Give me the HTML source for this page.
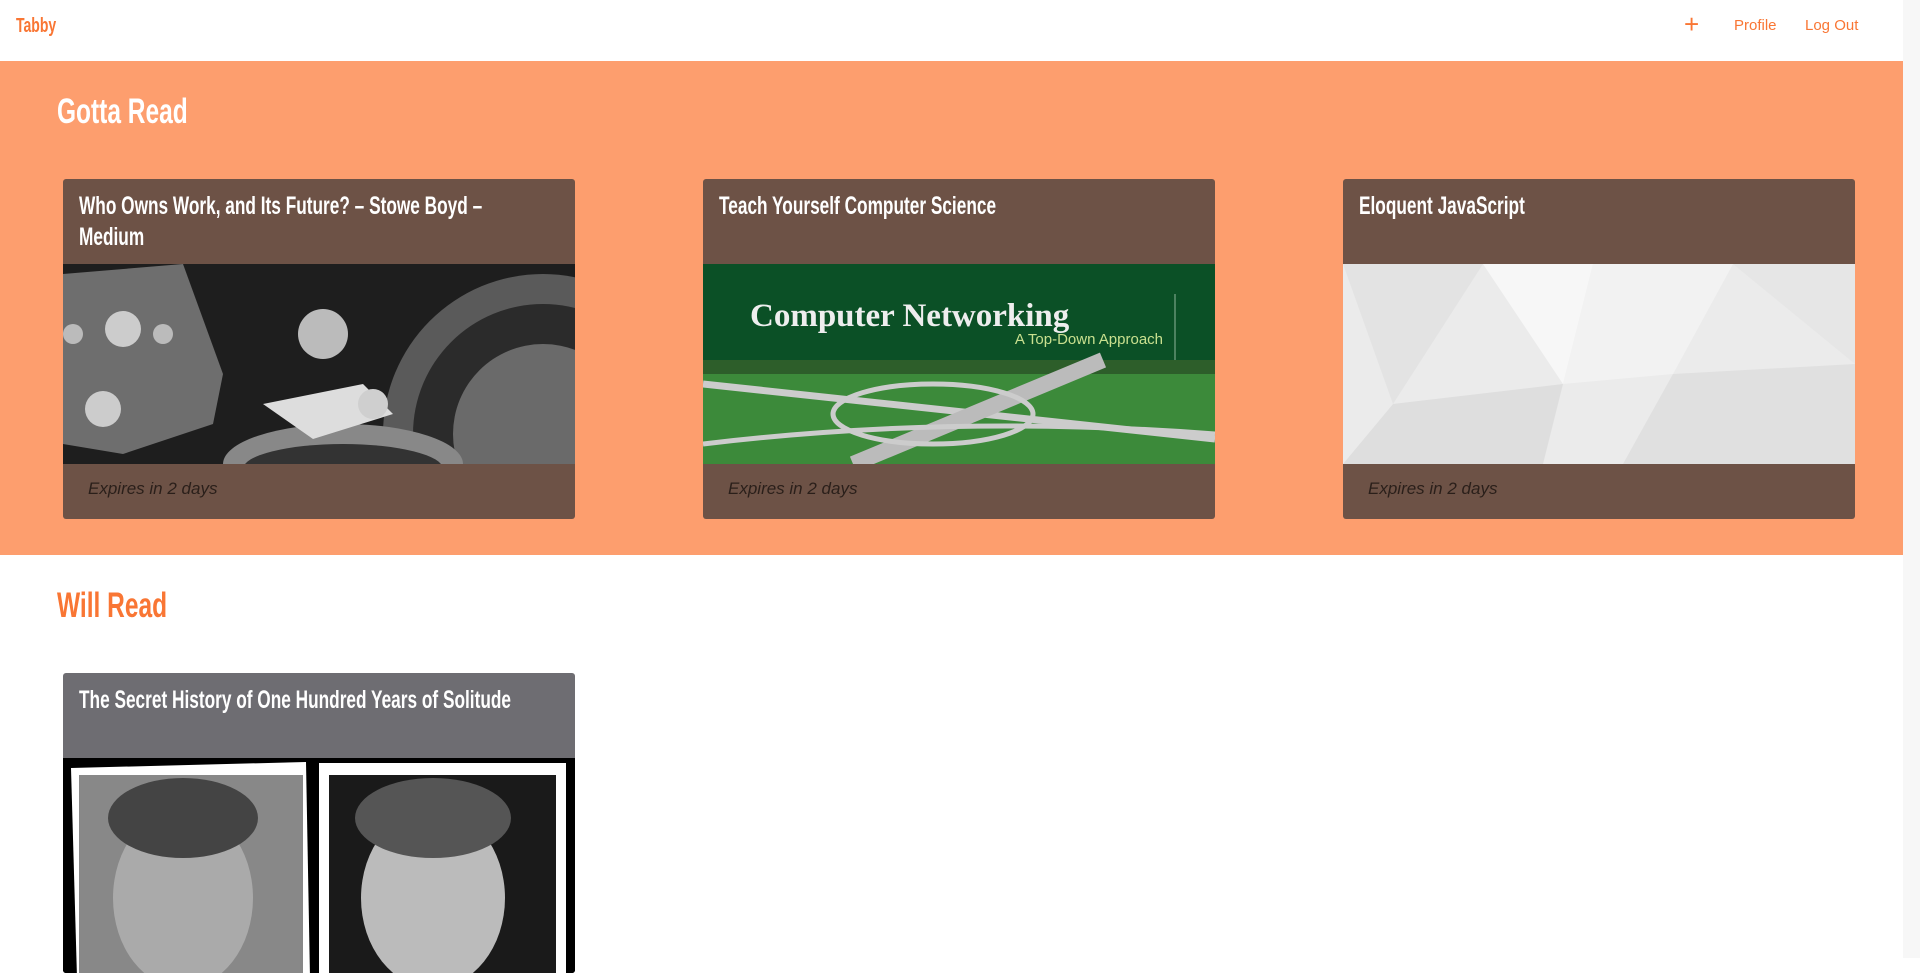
<!DOCTYPE html>
<html><head><meta charset="utf-8"><style>
*{margin:0;padding:0;box-sizing:border-box}
html,body{width:1920px;height:958px;overflow:hidden;background:#fff;font-family:"Liberation Sans",sans-serif}
.nav{position:absolute;left:0;top:0;width:1903px;height:61px;background:#fff}
.scroll{position:absolute;left:1903px;top:0;width:17px;height:958px;background:#f7f7f7}
.c{display:inline-block;transform:scaleX(.7);transform-origin:0 0;white-space:nowrap}
.brand{position:absolute;left:16px;top:15px;font-weight:bold;font-size:20px;color:#f97634}
.nl{position:absolute;top:17px;font-size:15px;color:#f97634}
.gotta{position:absolute;left:0;top:61px;width:1903px;height:494px;background:#fd9e6e}
h2{position:absolute;font-weight:bold;font-size:35px}
.card{position:absolute;width:512px;border-radius:3px;overflow:hidden;background:#6d5246}
.ct{height:85px;padding:12px 16px 0;color:#fff;font-size:25px;line-height:31px;font-weight:bold}
.ct .c{display:block;transform:scaleX(.69)}
.img{height:200px;position:relative;overflow:hidden}
.cf{height:54px;padding:15px 25px;font-style:italic;font-size:17px;color:#2a1f1a}
</style></head><body>
<div class="nav">
<div class="brand"><span class="c">Tabby</span></div>
<div class="nl" style="left:1684px;top:11px;font-size:26px;line-height:26px">+</div>
<div class="nl" style="left:1734px">Profile</div>
<div class="nl" style="left:1805px">Log Out</div>
</div>
<div class="scroll"></div>
<div class="gotta"></div>
<h2 style="left:57px;top:92px;color:#fff"><span class="c">Gotta Read</span></h2>

<div class="card" style="left:63px;top:179px;height:340px">
<div class="ct"><span class="c">Who Owns Work, and Its Future? – Stowe Boyd –</span><span class="c">Medium</span></div>
<div class="img" style="background:#2a2a2a">
<svg width="512" height="200" viewBox="0 0 512 200">
<rect width="512" height="200" fill="#1e1e1e"/>
<circle cx="480" cy="170" r="160" fill="#5a5a5a"/>
<circle cx="480" cy="170" r="130" fill="#2b2b2b"/>
<circle cx="480" cy="170" r="90" fill="#6a6a6a"/>
<circle cx="260" cy="70" r="25" fill="#bbb"/>
<polygon points="0,10 120,0 160,110 150,160 60,190 0,180" fill="#6e6e6e"/>
<circle cx="60" cy="65" r="18" fill="#ccc"/><circle cx="40" cy="145" r="18" fill="#ccc"/><circle cx="100" cy="70" r="10" fill="#bbb"/><circle cx="10" cy="70" r="10" fill="#bbb"/>
<ellipse cx="280" cy="200" rx="120" ry="40" fill="#888"/>
<ellipse cx="280" cy="205" rx="100" ry="25" fill="#333"/>
<path d="M200 140 L300 120 L330 150 L250 175 Z" fill="#ddd"/>
<circle cx="310" cy="140" r="15" fill="#cfcfcf"/>
</svg></div>
<div class="cf">Expires in 2 days</div>
</div>

<div class="card" style="left:703px;top:179px;height:340px">
<div class="ct"><span class="c">Teach Yourself Computer Science</span></div>
<div class="img">
<svg width="512" height="200" viewBox="0 0 512 200">
<rect width="512" height="96" fill="#0b5026"/>
<line x1="472" y1="30" x2="472" y2="96" stroke="#8fb59a" stroke-width="1"/>
<text x="47" y="62" font-family="Liberation Serif,serif" font-weight="bold" font-size="33" fill="#eee">Computer Networking</text>
<text x="460" y="80" text-anchor="end" font-family="Liberation Sans,sans-serif" font-size="15" fill="#c9e08f">A Top-Down Approach</text>
<rect y="96" width="512" height="104" fill="#3c8a3a"/>
<rect y="96" width="512" height="14" fill="#2d5e2a"/>
<path d="M0 120 L512 175" stroke="#ccc" stroke-width="7"/>
<path d="M150 200 L400 96" stroke="#bbb" stroke-width="16"/>
<ellipse cx="230" cy="150" rx="100" ry="30" fill="none" stroke="#ccc" stroke-width="5"/>
<path d="M0 180 Q250 150 512 170" stroke="#ccc" stroke-width="5" fill="none"/>
</svg></div>
<div class="cf">Expires in 2 days</div>
</div>

<div class="card" style="left:1343px;top:179px;height:340px">
<div class="ct"><span class="c">Eloquent JavaScript</span></div>
<div class="img">
<svg width="512" height="200" viewBox="0 0 512 200">
<rect width="512" height="200" fill="#ebebeb"/>
<polygon points="140,0 250,0 220,120" fill="#f7f7f7"/>
<polygon points="250,0 390,0 330,110 220,120" fill="#f2f2f2"/>
<polygon points="0,0 140,0 50,140" fill="#e3e3e3"/>
<polygon points="390,0 512,0 512,100" fill="#e6e6e6"/>
<polygon points="50,140 220,120 200,200 0,200" fill="#dedede"/>
<polygon points="330,110 512,100 512,200 280,200" fill="#e0e0e0"/>
</svg></div>
<div class="cf">Expires in 2 days</div>
</div>

<h2 style="left:57px;top:586px;color:#f97634"><span class="c">Will Read</span></h2>

<div class="card" style="left:63px;top:673px;height:300px;background:#6e6d72">
<div class="ct"><span class="c">The Secret History of One Hundred Years of Solitude</span></div>
<div class="img" style="height:220px;background:#000">
<svg width="512" height="220" viewBox="0 0 512 220">
<rect width="512" height="220" fill="#000"/>
<polygon points="8,10 243,4 247,220 14,220" fill="#fff"/>
<rect x="16" y="17" width="224" height="210" fill="#888"/>
<ellipse cx="120" cy="140" rx="70" ry="90" fill="#aaa"/>
<ellipse cx="120" cy="60" rx="75" ry="40" fill="#444"/>
<rect x="256" y="5" width="247" height="215" fill="#fff"/>
<rect x="266" y="17" width="227" height="210" fill="#1a1a1a"/>
<ellipse cx="370" cy="140" rx="72" ry="90" fill="#bbb"/>
<ellipse cx="370" cy="60" rx="78" ry="40" fill="#555"/>
</svg></div>
</div>
</body></html>
